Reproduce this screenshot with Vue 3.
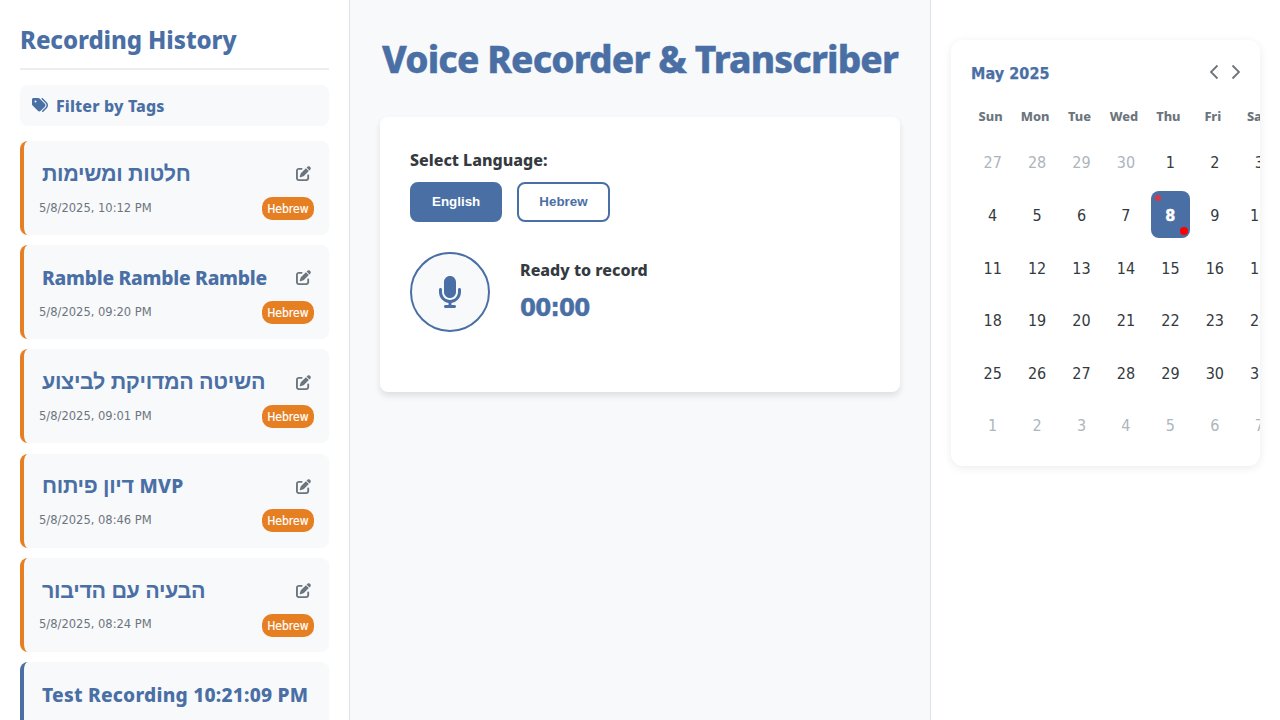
<script setup>
const recordings = [
  { title: 'חלטות ומשימות', he: true, date: '5/8/2025, 10:12 PM' },
  { title: 'Ramble Ramble Ramble', date: '5/8/2025, 09:20 PM' },
  { title: 'השיטה המדויקת לביצוע', he: true, date: '5/8/2025, 09:01 PM' },
  { title: 'דיון פיתוח', he: true, suffix: 'MVP', date: '5/8/2025, 08:46 PM' },
  { title: 'הבעיה עם הדיבור', he: true, date: '5/8/2025, 08:24 PM' },
  { title: 'Test Recording 10:21:09 PM', english: true, date: '5/8/2025, 10:21 PM' },
]
const weekdays = ['Sun', 'Mon', 'Tue', 'Wed', 'Thu', 'Fri', 'Sat']
const days = Array.from({ length: 42 }, (_, i) => {
  const n = i - 3
  if (n < 1) return { n: n + 30, muted: true }
  if (n > 31) return { n: n - 31, muted: true }
  return { n, muted: false, active: n === 8 }
})
</script>

<template>
  <div class="app">
    <aside class="history">
      <h2>Recording History</h2>
      <div class="filter">
        <svg viewBox="0 0 512 512" width="16" height="16" fill="currentColor"><path d="M345 39.1L472.8 168.4c52.4 53 52.4 138.2 0 191.2L360.8 472.9c-9.3 9.4-24.5 9.5-33.9 .2s-9.5-24.5-.2-33.9L438.6 325.9c33.9-34.3 33.9-89.4 0-123.7L310.9 72.9c-9.3-9.4-9.2-24.6 .2-33.9s24.6-9.2 33.9 .2zM0 229.5V80C0 53.5 21.5 32 48 32H197.5c17 0 33.3 6.7 45.3 18.7l168 168c25 25 25 65.5 0 90.5L277.3 442.7c-25 25-65.5 25-90.5 0l-168-168C6.7 262.7 0 246.5 0 229.5zM144 144a32 32 0 1 0 -64 0 32 32 0 1 0 64 0z"/></svg>
        <span>Filter by Tags</span>
      </div>
      <div v-for="r in recordings" :key="r.title" class="rec" :class="{ english: r.english }">
        <div class="rec-top">
          <div class="rec-title"><template v-if="r.suffix"><span class="he">{{ r.title }}</span> <span class="suffix">{{ r.suffix }}</span></template><span v-else :class="{ he: r.he }">{{ r.title }}</span></div>
          <svg v-if="!r.english" class="edit" viewBox="0 0 512 512" width="15" height="15" fill="currentColor"><path d="M471.6 21.7c-21.9-21.9-57.3-21.9-79.2 0L362.3 51.7l97.9 97.9 30.1-30.1c21.9-21.9 21.9-57.3 0-79.2L471.6 21.7zm-299.2 220c-6.1 6.1-10.8 13.6-13.5 21.9l-29.6 88.8c-2.9 8.6-.6 18.1 5.8 24.6s15.9 8.7 24.6 5.8l88.8-29.6c8.2-2.7 15.7-7.4 21.9-13.5L437.7 172.3 339.7 74.3 172.4 241.7zM96 64C43 64 0 107 0 160V416c0 53 43 96 96 96H352c53 0 96-43 96-96V320c0-17.7-14.3-32-32-32s-32 14.3-32 32v96c0 17.7-14.3 32-32 32H96c-17.7 0-32-14.3-32-32V160c0-17.7 14.3-32 32-32h96c17.7 0 32-14.3 32-32s-14.3-32-32-32H96z"/></svg>
        </div>
        <div class="rec-meta">
          <span class="date">{{ r.date }}</span>
          <span class="badge">{{ r.english ? 'English' : 'Hebrew' }}</span>
        </div>
      </div>
    </aside>

    <main class="main">
      <h1>Voice Recorder &amp; Transcriber</h1>
      <section class="recorder">
        <div class="label">Select Language:</div>
        <div class="langs">
          <button class="lang on">English</button>
          <button class="lang">Hebrew</button>
        </div>
        <div class="controls">
          <div class="mic">
            <svg viewBox="0 0 384 512" width="24" height="32" fill="currentColor"><path d="M192 0C139 0 96 43 96 96V256c0 53 43 96 96 96s96-43 96-96V96c0-53-43-96-96-96zM64 216c0-13.3-10.7-24-24-24s-24 10.7-24 24v40c0 89.1 66.2 162.7 152 174.4V464H120c-13.3 0-24 10.7-24 24s10.7 24 24 24h72 72c13.3 0 24-10.7 24-24s-10.7-24-24-24H216V430.4c85.8-11.7 152-85.3 152-174.4V216c0-13.3-10.7-24-24-24s-24 10.7-24 24v40c0 70.7-57.3 128-128 128s-128-57.3-128-128V216z"/></svg>
          </div>
          <div class="status">
            <div class="ready">Ready to record</div>
            <div class="timer">00:00</div>
          </div>
        </div>
      </section>
    </main>

    <aside class="side">
      <section class="calendar">
        <div class="cal-head">
          <div class="month">May 2025</div>
          <div class="nav">
            <svg viewBox="0 0 10 16" width="10" height="16"><path d="M8.500 1.500L2 8l6.500 6.500"/></svg>
            <svg viewBox="0 0 10 16" width="10" height="16"><path d="M1.500 1.500L8 8l-6.500 6.500"/></svg>
          </div>
        </div>
        <div class="grid weekdays">
          <div v-for="w in weekdays" :key="w">{{ w }}</div>
        </div>
        <div class="grid days">
          <div v-for="(d, i) in days" :key="i" class="day" :class="{ muted: d.muted, active: d.active }">
            <span>{{ d.n }}</span>
            <template v-if="d.active"><i class="dot small"></i><i class="dot big"></i></template>
          </div>
        </div>
      </section>
    </aside>
  </div>
</template>

<style>
html, body { margin: 0; overflow: hidden; }
</style>

<style scoped>
* { box-sizing: border-box; }
.app {
  display: grid;
  grid-template-columns: 350px 580px 350px;
  height: 720px;
  overflow: hidden;
  background: #f8f9fb;
  color: #343a40;
  font-family: "DejaVu Sans Condensed", "DejaVu Sans", sans-serif;
  font-stretch: condensed;
  font-size: 16px;
  white-space: nowrap;
}
svg { display: block; flex: none; }
h1, h2, .filter, .rec-title, .label, .ready, .weekdays {
  font-family: "Noto Sans", sans-serif;
  font-stretch: normal;
  font-weight: 800;
}
.history {
  background: #fff;
  border-right: 1px solid #dee2e6;
  padding: 20px;
  overflow: hidden;
}
h2 {
  margin: 0 0 14.500px;
  height: 50px;
  border-bottom: 2px solid #ebedef;
  color: #4a6fa5;
  font-size: 24px;
  line-height: 40px;
  letter-spacing: -0.080px;
}
.filter {
  display: flex;
  align-items: center;
  gap: 8px;
  height: 41.500px;
  margin-bottom: 15px;
  padding: 0 12px;
  border-radius: 8px;
  background: #f8f9fb;
  color: #4a6fa5;
  letter-spacing: 0.150px;
}
.filter span { padding-top: 2px; }
.filter svg { margin-top: -1px; }
.rec {
  height: 94px;
  margin-bottom: 10.200px;
  padding: 15px 15px 0;
  border-left: 4px solid #e67e22;
  border-radius: 8px;
  background: #f8f9fb;
}
.rec.english { border-color: #4a6fa5; }
.rec-top {
  display: flex;
  align-items: center;
  justify-content: space-between;
  height: 35.500px;
  padding: 0 3px;
}
.rec-title { color: #4a6fa5; font-size: 19.200px; line-height: 28px; letter-spacing: -0.230px; }
.english .rec-title { letter-spacing: 0.220px; }
.he {
  font-family: "Liberation Sans", Arial, sans-serif;
  font-size: 21.500px;
  font-weight: 700;
  line-height: 20px;
  letter-spacing: -0.330px;
}
.suffix { margin-left: 1px; letter-spacing: 0.250px; }
.edit { color: #6c757d; }
.rec-meta {
  display: flex;
  justify-content: space-between;
  align-items: flex-start;
  height: 32px;
}
.date { color: #6c757d; font-size: 12.800px; line-height: 31.500px; }
.badge {
  height: 23px;
  margin-top: 5.300px;
  padding: 1px 5.500px 0;
  border-radius: 10px;
  background: #e67e22;
  color: #fff;
  font-size: 12px;
  line-height: 22px;
  -webkit-text-stroke: 0.200px #fff;
}
.english .rec-meta { padding-top: 3px; }
.english .badge { margin-top: 8px; background: #4a6fa5; }
.main { padding: 30px; }
h1 {
  margin: 0 -10px 26.500px;
  height: 60px;
  color: #4a6fa5;
  font-size: 37px;
  line-height: 58px;
  letter-spacing: -0.850px;
  text-align: center;
  -webkit-text-stroke: 0.400px #4a6fa5;
}
.recorder {
  height: 275px;
  padding: 30px;
  border-radius: 8px;
  background: #fff;
  box-shadow: 0 4px 6px rgba(0, 0, 0, .1);
}
.label { height: 35.500px; line-height: 27px; }
.langs { display: flex; gap: 15px; margin-bottom: 30px; }
.lang {
  width: 92.300px;
  height: 39.500px;
  padding: 0 0 1px;
  border: 2px solid #4a6fa5;
  border-radius: 8px;
  background: #fff;
  color: #4a6fa5;
  font: 700 13.333px "Liberation Sans", Arial, sans-serif;
}
.lang.on { background: #4a6fa5; color: #fff; }
.controls { display: flex; gap: 30px; align-items: center; }
.mic {
  display: flex;
  align-items: center;
  justify-content: center;
  width: 80px;
  height: 80px;
  border: 2px solid #4a6fa5;
  border-radius: 50%;
  background: #f8f9fb;
  color: #4a6fa5;
}
.ready { height: 30px; line-height: 27px; }
.timer {
  height: 40px;
  color: #4a6fa5;
  font-size: 25.600px;
  font-weight: 700;
  line-height: 41px;
  letter-spacing: -0.750px;
  -webkit-text-stroke: 0.400px #4a6fa5;
}
.side {
  padding: 40px 20px;
  border-left: 1px solid #dee2e6;
  background: #fff;
}
.calendar {
  height: 426px;
  padding: 20px;
  overflow: hidden;
  border-radius: 12px;
  background: #fff;
  box-shadow: 0 2px 10px rgba(0, 0, 0, .08);
}
.cal-head {
  display: flex;
  justify-content: space-between;
  height: 42px;
}
.month {
  color: #4a6fa5;
  font-weight: 700;
  line-height: 27px;
  letter-spacing: 0.080px;
  -webkit-text-stroke: 0.250px #4a6fa5;
}
.nav { display: flex; gap: 12px; margin-right: -1px; padding-top: 4px; }
.nav path { fill: none; stroke: #6c757d; stroke-width: 1.800; }
.grid {
  display: grid;
  grid-template-columns: repeat(7, 39.260px);
  column-gap: 5.200px;
}
.weekdays {
  height: 34px;
  color: #6c757d;
  font-size: 12.800px;
  line-height: 29px;
  text-align: center;
}
.days {
  grid-auto-rows: 47.400px;
  row-gap: 5.200px;
  margin-left: 2px;
  padding-top: 2.200px;
}
.day {
  position: relative;
  display: flex;
  align-items: center;
  justify-content: center;
  padding-top: 2px;
  border-radius: 8px;
}
.muted { color: #adb5bd; }
.active { background: #4a6fa5; color: #fff; font-weight: 700; }
.active span { -webkit-text-stroke: 0.400px #fff; }
.dot { position: absolute; border-radius: 50%; }
.small { top: 4px; left: 4px; width: 6px; height: 6px; background: #dc3545; }
.big { right: 2.500px; bottom: 3px; width: 8px; height: 8px; background: red; }
</style>
